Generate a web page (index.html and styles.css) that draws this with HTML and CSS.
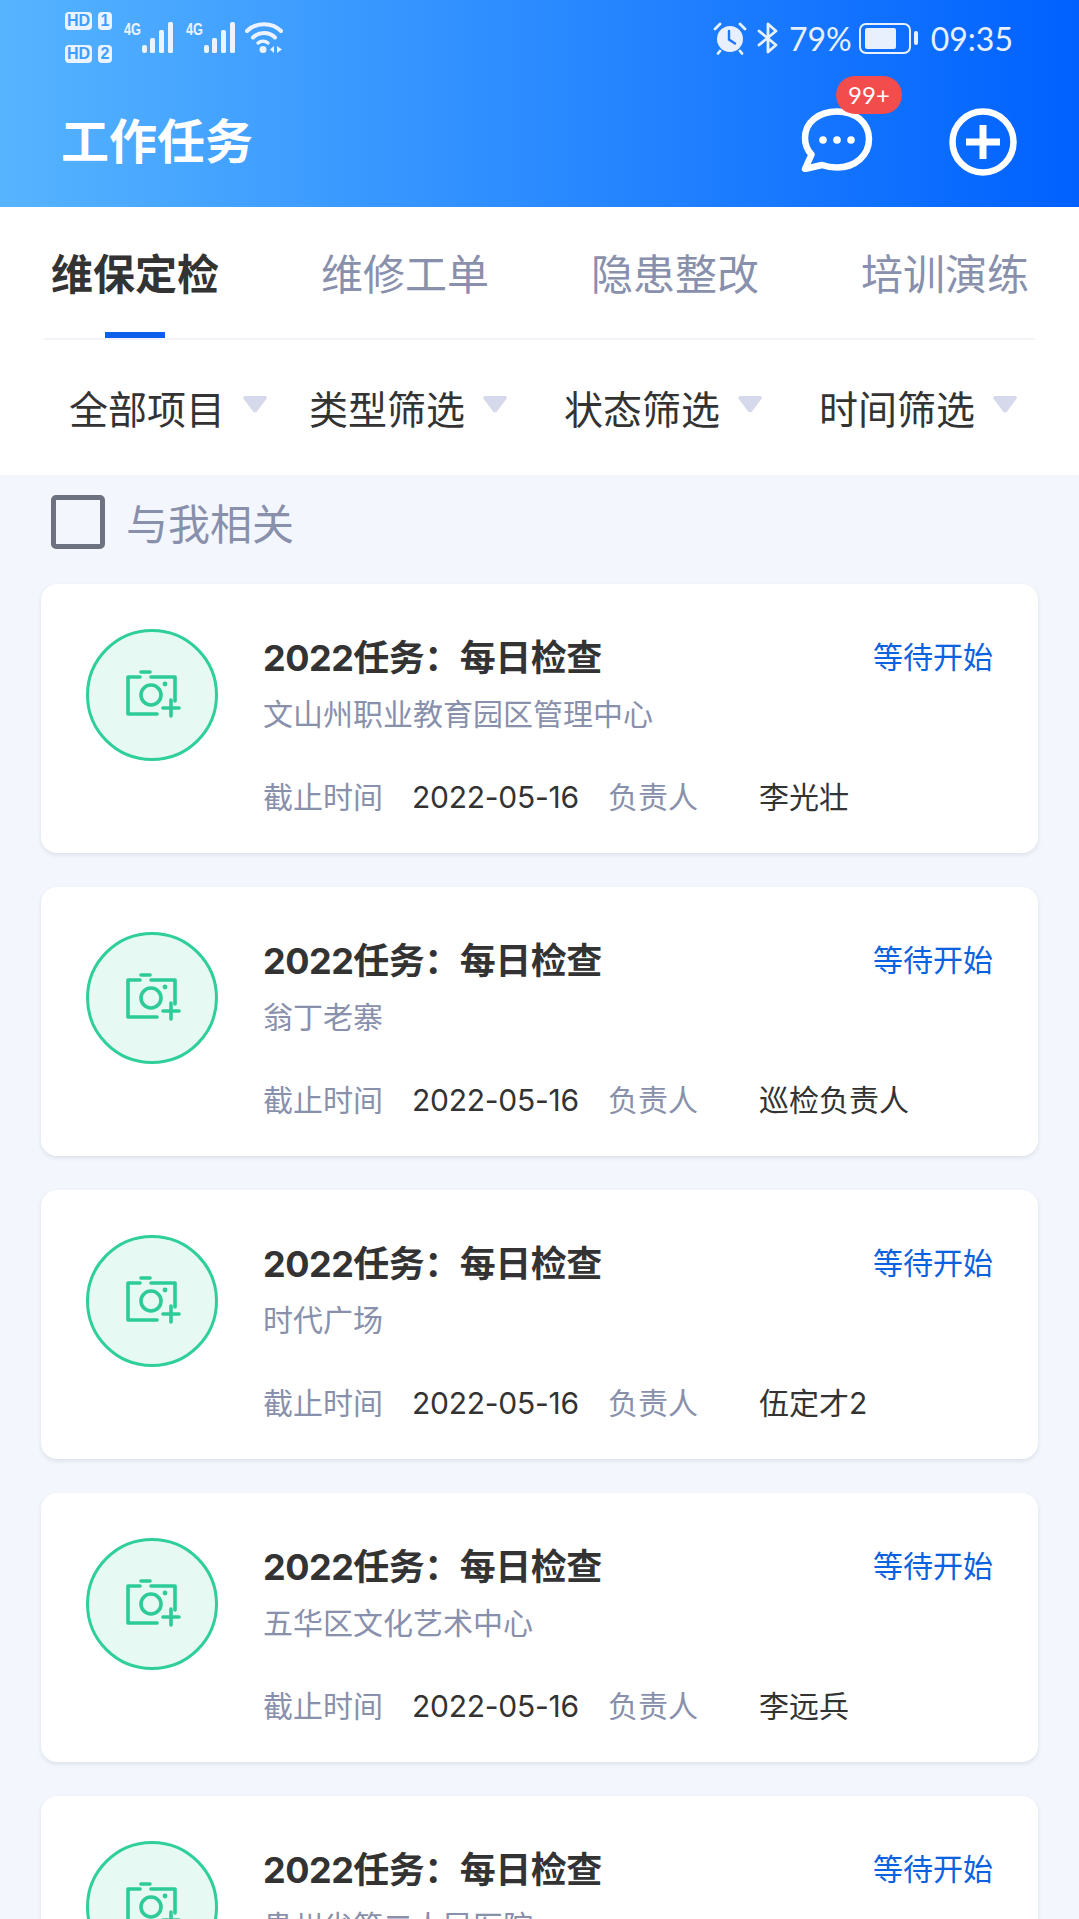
FILE: index.html
```html
<!DOCTYPE html>
<html lang="zh-CN">
<head>
<meta charset="UTF-8" />
<meta name="viewport" content="width=device-width, initial-scale=1" />
<title>工作任务</title>
<link rel="stylesheet" href="styles.css">
</head>
<body>
  <svg width="0" height="0" class="defs">
    <symbol id="camera" viewBox="0 0 130 130">
      <path d="M54 48H42V85H71M65 48H89V72M55 43H64M77 79H93M85 71V87" fill="none" stroke="#2dcb98" stroke-width="3.6" stroke-linecap="round" stroke-linejoin="round" />
      <circle cx="65" cy="66" r="10" fill="none" stroke="#2dcb98" stroke-width="3.6" />
      <circle cx="79" cy="55" r="2.4" fill="#2dcb98" />
    </symbol>
  </svg>

  <header class="top">
    <div class="status-bar">
      <div class="status-left">
        <div class="sims">
          <div class="sim"><span class="sim-hd">HD</span><span class="sim-no">1</span></div>
          <div class="sim"><span class="sim-hd">HD</span><span class="sim-no">2</span></div>
        </div>
        <svg class="signal" viewBox="0 0 50 31">
          <text x="0" y="13" class="net-text" textLength="17" lengthAdjust="spacingAndGlyphs">4G</text>
          <rect x="18" y="23" width="5" height="8" rx="2" />
          <rect x="26" y="16" width="5" height="15" rx="1.5" />
          <rect x="35" y="8" width="5" height="23" rx="1.5" />
          <rect x="44" y="0" width="5" height="31" rx="1.5" />
        </svg>
        <svg class="signal" viewBox="0 0 50 31">
          <text x="0" y="13" class="net-text" textLength="17" lengthAdjust="spacingAndGlyphs">4G</text>
          <rect x="18" y="23" width="5" height="8" rx="2" />
          <rect x="26" y="16" width="5" height="15" rx="1.5" />
          <rect x="35" y="8" width="5" height="23" rx="1.5" />
          <rect x="44" y="0" width="5" height="31" rx="1.5" />
        </svg>
        <svg class="wifi" viewBox="0 0 38 31">
          <path d="M2 9C11 0 27 0 36 9M8 15.500C14 9.500 24 9.500 30 15.500" fill="none" stroke="#eaf3ff" stroke-width="4" stroke-linecap="round" />
          <path d="M13 21C16 18.500 20 18.500 23 21" fill="none" stroke="#eaf3ff" stroke-width="3.500" stroke-linecap="round" />
          <circle cx="18" cy="27.500" r="3.500" fill="#eaf3ff" />
          <path d="M25 27.500l4-3.500v7zM32 24l5 3.500-5 3.500z" fill="#eaf3ff" />
        </svg>
      </div>
      <div class="status-right">
        <svg class="alarm" viewBox="0 0 34 34">
          <circle cx="17" cy="18" r="13" fill="#e9f0fd" />
          <path d="M16 10v8.500l6 4" fill="none" stroke="#1f74ff" stroke-width="2.400" stroke-linecap="round" />
          <path d="M2 8l5-5M32 8l-5-5M7 30l-2 2.500M27 30l2 2.500" fill="none" stroke="#e9f0fd" stroke-width="2.800" stroke-linecap="round" />
        </svg>
        <svg class="bluetooth" viewBox="0 0 22 32">
          <path d="M2 9l17 14-8 7V2l8 7L2 23" fill="none" stroke="#e9f0fd" stroke-width="2.800" stroke-linejoin="round" stroke-linecap="round" />
        </svg>
        <span class="percent">79%</span>
        <div class="battery">
          <div class="battery-body"><div class="battery-fill" style="width: 79%"></div></div>
          <div class="battery-tip"></div>
        </div>
        <span class="clock">09:35</span>
      </div>
    </div>
    <div class="nav-bar">
      <h1>工作任务</h1>
      <div class="nav-actions">
        <div class="msg-btn">
          <svg class="msg-icon" viewBox="0 0 72 64">
            <path d="M36 3.500C18 3.500 4 14 4 30c0 6.500 2.200 12 6.500 16.500L4 61l17-4c4.500 1.600 9.500 2.500 15 2.500 18 0 32-12 32-28.500S54 3.500 36 3.500z" fill="none" stroke="#fff" stroke-width="6.500" stroke-linejoin="round" />
            <circle cx="22" cy="32" r="3.800" fill="#fff" />
            <circle cx="36" cy="32" r="3.800" fill="#fff" />
            <circle cx="50" cy="32" r="3.800" fill="#fff" />
          </svg>
          <span class="badge">99+</span>
        </div>
        <svg class="add-icon" viewBox="0 0 68 68">
          <circle cx="34" cy="34" r="30.500" fill="none" stroke="#fff" stroke-width="6.500" />
          <path d="M17 34H51M34 17V51" fill="none" stroke="#fff" stroke-width="7" />
        </svg>
      </div>
    </div>
  </header>

  <section class="panel">
    <div class="tabs">
      <div class="tab active">维保定检</div>
      <div class="tab">维修工单</div>
      <div class="tab">隐患整改</div>
      <div class="tab">培训演练</div>
    </div>
    <div class="filters">
      <div class="filter first"><span>全部项目</span><i class="caret"></i></div>
      <div class="filter"><span>类型筛选</span><i class="caret"></i></div>
      <div class="filter"><span>状态筛选</span><i class="caret"></i></div>
      <div class="filter"><span>时间筛选</span><i class="caret"></i></div>
    </div>
  </section>

  <main class="content">
    <label class="mine"><span class="checkbox"></span>与我相关</label>

    <div class="card">
      <div class="card-icon"><svg><use href="#camera" /></svg></div>
      <div class="card-body">
        <div class="card-head"><h2>2022任务：每日检查</h2><span class="state">等待开始</span></div>
        <div class="place">文山州职业教育园区管理中心</div>
        <div class="meta"><span class="label">截止时间</span><span class="date">2022-05-16</span><span class="label owner">负责人</span><span class="name">李光壮</span></div>
      </div>
    </div>

    <div class="card">
      <div class="card-icon"><svg><use href="#camera" /></svg></div>
      <div class="card-body">
        <div class="card-head"><h2>2022任务：每日检查</h2><span class="state">等待开始</span></div>
        <div class="place">翁丁老寨</div>
        <div class="meta"><span class="label">截止时间</span><span class="date">2022-05-16</span><span class="label owner">负责人</span><span class="name">巡检负责人</span></div>
      </div>
    </div>

    <div class="card">
      <div class="card-icon"><svg><use href="#camera" /></svg></div>
      <div class="card-body">
        <div class="card-head"><h2>2022任务：每日检查</h2><span class="state">等待开始</span></div>
        <div class="place">时代广场</div>
        <div class="meta"><span class="label">截止时间</span><span class="date">2022-05-16</span><span class="label owner">负责人</span><span class="name">伍定才2</span></div>
      </div>
    </div>

    <div class="card">
      <div class="card-icon"><svg><use href="#camera" /></svg></div>
      <div class="card-body">
        <div class="card-head"><h2>2022任务：每日检查</h2><span class="state">等待开始</span></div>
        <div class="place">五华区文化艺术中心</div>
        <div class="meta"><span class="label">截止时间</span><span class="date">2022-05-16</span><span class="label owner">负责人</span><span class="name">李远兵</span></div>
      </div>
    </div>

    <div class="card">
      <div class="card-icon"><svg><use href="#camera" /></svg></div>
      <div class="card-body">
        <div class="card-head"><h2>2022任务：每日检查</h2><span class="state">等待开始</span></div>
        <div class="place">贵州省第二人民医院</div>
      </div>
    </div>
  </main>
</body>
</html>
```

FILE: styles.css
```css
/* Reset */
* {
  box-sizing: border-box;
  margin: 0;
  padding: 0;
}
html, body {
  height: 100%;
  overflow: hidden;
}
body {
  background: #f3f6fc;
  color: #333;
  font-family: Inter, "Noto Sans CJK SC", sans-serif;
}
.defs {
  position: absolute;
}

/* Blue header */
.top {
  height: 207px;
  background: linear-gradient(90deg, #56b4ff 0%, #0061ff 100%);
  color: #fff;
}
.status-bar {
  height: 77px;
  padding: 0 66px 0 65px;
  display: flex;
  justify-content: space-between;
}
.status-left {
  display: flex;
  align-items: flex-start;
}
.sims {
  padding-top: 12px;
  display: flex;
  flex-direction: column;
  gap: 15px;
}
.sim {
  display: flex;
  gap: 6px;
  height: 18px;
}
.sim span {
  background: #eaf3ff;
  color: #3f9dff;
  border-radius: 4px;
  font-family: "Liberation Sans", sans-serif;
  font-weight: 700;
  font-size: 16px;
  line-height: 18px;
  text-align: center;
}
.sim-hd {
  width: 27px;
}
.sim-no {
  width: 14px;
}
.signal {
  width: 50px;
  height: 31px;
  margin: 22px 0 0 12px;
  fill: #eaf3ff;
}
.net-text {
  font-family: "Liberation Sans", sans-serif;
  font-weight: 700;
  font-size: 16px;
}
.wifi {
  width: 38px;
  height: 31px;
  margin: 22px 0 0 9px;
}
.status-right {
  display: flex;
  align-items: center;
  height: 76px;
  color: #e9f0fd;
  font-family: "Lato", sans-serif;
  font-size: 32px;
}
.alarm {
  width: 34px;
  height: 34px;
}
.bluetooth {
  width: 22px;
  height: 32px;
  margin-left: 10px;
}
.percent {
  margin-left: 10px;
}
.battery {
  display: flex;
  align-items: center;
  gap: 3px;
  margin-left: 7px;
}
.battery-body {
  width: 52px;
  height: 31px;
  border: 2.500px solid #e9f0fd;
  border-radius: 7px;
  padding: 3px 4px;
}
.battery-fill {
  height: 100%;
  background: #e9f0fd;
  border-radius: 2px;
}
.battery-tip {
  width: 4px;
  height: 14px;
  background: #e9f0fd;
  border-radius: 2px;
}
.clock {
  margin-left: 13px;
}
.nav-bar {
  height: 130px;
  padding: 0 62px 0 61px;
  display: flex;
  align-items: center;
  justify-content: space-between;
}
h1 {
  font-size: 48px;
  font-weight: 700;
  line-height: 1;
  padding-bottom: 1px;
}
.nav-actions {
  display: flex;
  align-items: center;
  gap: 76px;
}
.msg-btn {
  position: relative;
  display: flex;
  margin-bottom: 4px;
}
.msg-icon {
  width: 72px;
  height: 64px;
}
.add-icon {
  width: 68px;
  height: 68px;
}
.badge {
  position: absolute;
  left: 35px;
  top: -32px;
  width: 66px;
  height: 38px;
  border-radius: 19px;
  background: #f24c4c;
  font-family: "Lato", sans-serif;
  font-size: 24px;
  line-height: 38px;
  text-align: center;
}

/* Tabs and filters */
.panel {
  background: #fff;
  height: 268px;
}
.tabs {
  margin: 0 44px;
  height: 133px;
  padding: 38px 0 0 7px;
  display: flex;
  gap: 102px;
  border-bottom: 2px solid #f1f3f8;
}
.tab {
  position: relative;
  font-size: 42px;
  line-height: 60px;
  color: #8890ac;
}
.tab.active {
  color: #333;
  font-weight: 700;
}
.tab.active::after {
  content: "";
  position: absolute;
  left: 54px;
  bottom: 0;
  width: 60px;
  height: 6px;
  background: #0b5fe8;
}
.filters {
  height: 135px;
  padding: 42px 0 0 69px;
  display: flex;
  gap: 57px;
}
.filter {
  display: flex;
  gap: 18px;
  font-size: 39px;
  line-height: 56px;
  color: #333;
}
.filter.first {
  margin-right: -15px;
}
.caret {
  width: 24px;
  height: 17px;
  margin-top: 14px;
  background: #d6d9ec;
  clip-path: polygon(4% 0, 96% 0, 100% 12%, 56% 96%, 44% 96%, 0 12%);
}

/* Task list */
.content {
  padding: 0 41px;
}
.mine {
  height: 109px;
  padding: 18px 0 0 10px;
  display: flex;
  align-items: flex-start;
  gap: 21px;
  font-size: 42px;
  line-height: 64px;
  color: #8890ac;
}
.checkbox {
  width: 54px;
  height: 54px;
  margin-top: 2px;
  border: 5px solid #6d7280;
  border-radius: 5px;
}
.card {
  height: 269px;
  margin-bottom: 34px;
  padding: 45px 45px 0;
  background: #fff;
  border-radius: 16px;
  box-shadow: 0 2px 4px rgba(60, 70, 100, 0.12);
  display: flex;
  gap: 45px;
}
.card-icon {
  flex: none;
  width: 132px;
  height: 132px;
  border: 3px solid #2fcf9c;
  border-radius: 50%;
  background: #e6f9f3;
}
.card-icon svg {
  display: block;
  width: 130px;
  height: 130px;
  margin: -3px;
}
.card-body {
  flex: 1;
}
.card-head {
  display: flex;
  justify-content: space-between;
  align-items: center;
  height: 51px;
}
h2 {
  font-size: 36px;
  font-weight: 700;
  letter-spacing: -0.5px;
  color: #333;
}
.state {
  font-size: 30px;
  color: #0b62e0;
}
.place {
  margin-top: 12px;
  font-size: 30px;
  line-height: 44px;
  color: #8890ac;
}
.meta {
  margin-top: 39px;
  display: flex;
  font-size: 30px;
  line-height: 44px;
}
.label {
  color: #8890ac;
}
.date {
  margin-left: 29px;
  letter-spacing: -0.25px;
  color: #333;
}
.owner {
  margin-left: 29px;
}
.name {
  margin-left: 61px;
  color: #333;
}
```
